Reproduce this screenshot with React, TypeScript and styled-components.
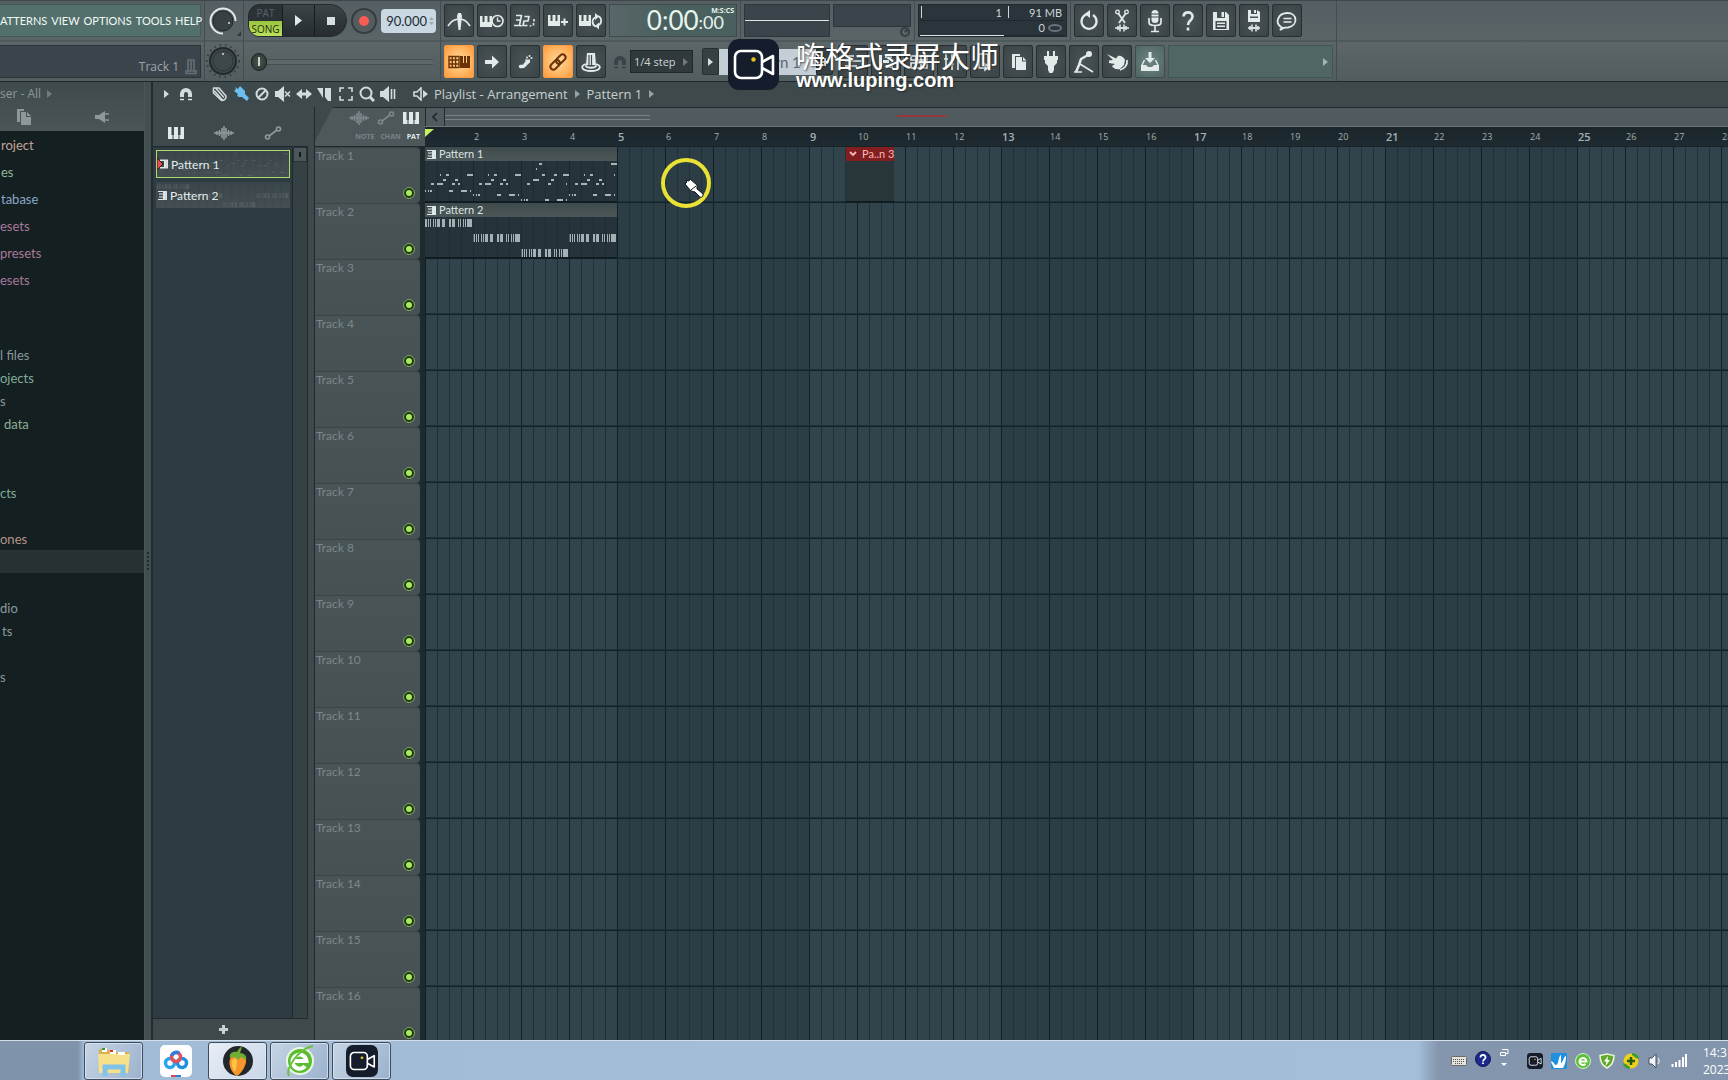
import React from "react";
import styled, { createGlobalStyle, css } from "styled-components";

const narrow = `Lato, "Open Sans", sans-serif`;
const humanist = `"Open Sans", "Noto Sans", sans-serif`;

const Global = createGlobalStyle`
  *, *::before, *::after { box-sizing: border-box; }
  body { margin: 0; background: #3e494b; overflow: hidden; }
  button, input, select { font: inherit; color: inherit; margin: 0; padding: 0; border: 0; background: none; }
  h1, h2, p, ul, ol { margin: 0; padding: 0; font-weight: 400; list-style: none; }
  svg { display: block; flex: none; }
`;

const Screen = styled.div`
  position: relative;
  display: flex;
  flex-direction: column;
  height: 100vh;
  overflow: hidden;
  font-family: ${narrow};
  color: #dfe6e6;
`;

/* ---------- top toolbar ---------- */

const Toolbar = styled.header`
  display: flex;
  height: 82px;
  flex: none;
  background: linear-gradient(#555e62, #5a6568 39px, #414c4f 40px, #5c6669 41px, #525d60);
  border-top: 1px solid #3e474a;
  border-bottom: 1px solid #20292c;
`;

const Block = styled.div<{ $w?: number }>`
  display: grid;
  grid-template-rows: 39px 41px;
  width: ${(p) => (p.$w ? `${p.$w}px` : "auto")};
  flex: none;
  border-right: 1px solid #434c4f;
`;

const Row = styled.div<{ $gap?: number; $pad?: string }>`
  display: flex;
  align-items: center;
  gap: ${(p) => p.$gap ?? 0}px;
  padding: ${(p) => p.$pad ?? "0"};
  min-width: 0;
`;

const Divider = styled.span`
  width: 1px;
  height: 39px;
  background: #434c4f;
`;

const MenuBar = styled.nav`
  display: flex;
  align-items: center;
  gap: 4px;
  width: 201px;
  height: 33px;
  background: #53706c;
  border: 1px solid #425855;
  border-left: 0;
`;

const MenuItem = styled.button`
  font-size: 11px;
  line-height: 20px;
  color: #f2faf6;
`;

const HintBar = styled.div`
  display: flex;
  align-items: flex-end;
  justify-content: flex-end;
  gap: 6px;
  width: 201px;
  height: 33px;
  padding: 0 3px 2px;
  background: #3b444b;
  border: 1px solid #2b3438;
  border-left: 0;
  font-family: ${humanist};
  font-size: 12px;
  line-height: 16px;
  color: #9aa4a8;
`;

const KnobCell = styled.div`
  display: grid;
  place-items: center;
  width: 100%;
`;

const Transport = styled.div`
  display: flex;
  width: 99px;
  height: 33px;
  overflow: hidden;
  border: 1px solid #23292c;
  border-radius: 12px 17px 17px 12px;
  background: #2b3236;
`;

const ModeSwitch = styled.div`
  display: grid;
  grid-template-rows: 16px 15px;
  width: 33px;
`;

const Mode = styled.button<{ $on?: boolean }>`
  font-family: ${humanist};
  font-size: 10px;
  line-height: 14px;
  text-align: center;
  color: ${(p) => (p.$on ? "#1d2a0c" : "#5a6367")};
  background: ${(p) => (p.$on ? "linear-gradient(#9ac53c, #bbe45d)" : "transparent")};
`;

const TransportKey = styled.button`
  display: grid;
  place-items: center;
  flex: 1;
  border-left: 1px solid #171c1f;
  background: linear-gradient(#3c4448, #262c30);
`;

const RecordRing = styled.button`
  display: grid;
  place-items: center;
  width: 26px;
  height: 26px;
  flex: none;
  border-radius: 50%;
  border: 2px solid #343c3f;
  background: #555d60;
`;

const TempoBox = styled.label`
  display: flex;
  align-items: center;
  gap: 2px;
  width: 55px;
  height: 24px;
  border-radius: 4px;
  background: #c9d8e2;
`;

const Tempo = styled.input`
  width: 46px;
  height: 24px;
  outline: 0;
  color: #222c34;
  font-size: 13px;
  text-align: right;
`;

const Slider = styled.input`
  appearance: none;
  width: 182px;
  height: 18px;
  background: linear-gradient(transparent 6px, #454e51 6px 7px, #5d676a 7px 11px, #454e51 11px 12px, transparent 12px);
  &::-webkit-slider-thumb {
    appearance: none;
    width: 16px;
    height: 18px;
    border-radius: 8px;
    border: 1px solid #1c2521;
    background: linear-gradient(90deg, transparent 6px, #c9d2cc 6px 8px, transparent 8px) 0 3px / 14px 9px no-repeat, radial-gradient(#4b5b53, #26302c);
  }
`;

const ToolButton = styled.button<{ $tone?: "hot" | "glass" }>`
  display: grid;
  place-items: center;
  width: 30px;
  height: 33px;
  flex: none;
  color: #e2eaea;
  border: 1px solid #272f32;
  border-radius: 2px;
  background: radial-gradient(#4a5457, #3a4447);
  ${(p) => p.$tone === "hot" && css`
    color: #6b3207;
    border-color: #ff9c3f;
    background: radial-gradient(#ffdd9c, #ff9a3c);
  `}
  ${(p) => p.$tone === "glass" && css`
    background: radial-gradient(#6d8582, #4f6563);
    border-color: #3d4d4c;
  `}
`;

const SnapBox = styled.label`
  display: flex;
  align-items: center;
  gap: 3px;
  width: 63px;
  height: 23px;
  padding: 0 4px 0 3px;
  background: #30393c;
  border: 1px solid #20282b;
  font-family: ${humanist};
  font-size: 11px;
  color: #cdd6d8;
`;

const SnapSelect = styled.select`
  appearance: none;
  width: 46px;
  outline: 0;
`;

const SmallArrow = styled.button`
  display: grid;
  place-items: center;
  width: 17px;
  height: 27px;
  background: #363f42;
  border: 1px solid #262e31;
  border-radius: 2px;
`;

const PatternName = styled.button`
  width: 97px;
  height: 26px;
  padding-left: 6px;
  background: #c3ced6;
  color: #5d676e;
  font-size: 15px;
  text-align: center;
`;

const Clock = styled.div`
  position: relative;
  display: flex;
  align-items: flex-end;
  justify-content: flex-end;
  width: 128px;
  height: 33px;
  padding: 0 12px 2px 0;
  background: linear-gradient(90deg, #5a6669, #49605e 60px);
  border: 1px solid #3f4a4d;
  color: #e6f4ee;
`;

const ClockBig = styled.span`
  font-size: 26px;
  line-height: 28px;
`;

const ClockSmall = styled.span`
  font-size: 18px;
  line-height: 24px;
`;

const ClockUnit = styled.span`
  position: absolute;
  top: 2px;
  right: 2px;
  font-family: ${humanist};
  font-size: 7px;
  font-weight: 700;
  line-height: 8px;
`;

const Scope = styled.div`
  display: flex;
  align-items: center;
  width: 86px;
  height: 33px;
  background: #3b444b;
  border: 1px solid #2d363a;
  &::after { content: ""; flex: 1; height: 1px; background: #dde4e8; }
`;

const Peak = styled.div`
  display: grid;
  grid-template-rows: 23px 10px;
  justify-items: end;
  width: 78px;
  height: 33px;
`;

const PeakScreen = styled.div`
  width: 100%;
  height: 23px;
  background: #3b444b;
  border: 1px solid #2d363a;
`;

const Meter = styled.dl`
  display: grid;
  grid-template-columns: 84px 1fr;
  grid-template-rows: 16px 15px;
  width: 149px;
  height: 33px;
  margin: 0;
  padding: 0 2px 0 1px;
  background: #2b343b;
  border: 1px solid #20292e;
  font-size: 11px;
  line-height: 16px;
  color: #ccd6da;
`;

const MeterCell = styled.dd<{ $bar?: boolean; $base?: boolean }>`
  display: flex;
  align-items: center;
  justify-content: flex-end;
  gap: 3px;
  margin: 0;
  padding-right: 2px;
  border-bottom: ${(p) => (p.$base ? "1px solid #dde4e8" : "1px solid #20292e")};
  ${(p) => p.$bar && css`background: linear-gradient(#cdd6d8, #cdd6d8) 1px 1px / 1px 12px no-repeat;`}
  &:nth-child(2) { background-position: 4px 1px; }
`;

const NewsPanel = styled.div`
  display: flex;
  align-items: center;
  justify-content: flex-end;
  width: 165px;
  height: 33px;
  padding-right: 4px;
  background: #506664;
  border: 1px solid #425654;
`;

/* ---------- workspace ---------- */

const Workspace = styled.main`
  display: flex;
  flex: 1;
  min-height: 0;
`;

const Browser = styled.aside`
  display: flex;
  flex-direction: column;
  width: 144px;
  flex: none;
  overflow: hidden;
  background: #141f22;
`;

const BrowserHead = styled.div`
  height: 49px;
  padding-top: 3px;
  background: linear-gradient(#3f4a4c, #4a5557);
  color: #8d989b;
  font-family: ${humanist};
`;

const BrowserTitle = styled.h2`
  display: flex;
  align-items: center;
  gap: 6px;
  font-size: 12px;
  line-height: 18px;
`;

const BrowserIcons = styled.div`
  display: flex;
  align-items: center;
  gap: 64px;
  padding: 6px 0 0 17px;
`;

const Tree = styled.ul<{ $row: number }>`
  display: grid;
  grid-auto-rows: ${(p) => p.$row}px;
  & + & { padding-top: 50px; }
`;

const TreeRow = styled.li<{ $tone?: string; $active?: boolean; $pad?: number }>`
  display: flex;
  align-items: center;
  padding-left: ${(p) => p.$pad ?? 0}px;
  font-size: 13px;
  white-space: pre;
  color: ${(p) => p.$tone ?? "#8a9a9b"};
  background: ${(p) => (p.$active ? "#263134" : "transparent")};
`;

const Splitter = styled.div`
  display: grid;
  align-content: center;
  justify-content: center;
  width: 9px;
  flex: none;
  background: #434e51;
  border-left: 1px solid #4a5558;
  border-right: 2px solid #222c30;
`;

const Playlist = styled.section`
  display: flex;
  flex-direction: column;
  flex: 1;
  min-width: 0;
  background: #3e494b;
`;

const TitleBar = styled.div`
  display: flex;
  align-items: center;
  height: 25px;
  flex: none;
  padding: 0 0 1px 10px;
  gap: 4px;
`;

const TitleTool = styled.button<{ $tone?: string; $w?: number }>`
  display: grid;
  place-items: center;
  width: ${(p) => p.$w ?? 17}px;
  height: 18px;
  color: ${(p) => p.$tone ?? "#d3dcdc"};
`;

const Crumbs = styled.h1`
  display: flex;
  align-items: center;
  gap: 7px;
  font-family: ${humanist};
  font-size: 13px;
  line-height: 18px;
  color: #c6d0d1;
`;

const Body = styled.div`
  display: grid;
  grid-template-columns: 155px 6px 111px minmax(0, 1fr);
  flex: 1;
  min-height: 0;
`;

const Picker = styled.div`
  display: grid;
  grid-template-rows: 39px minmax(0, 1fr) 21px;
  min-height: 0;
`;

const PickerTabs = styled.div`
  display: flex;
  align-items: center;
  gap: 30px;
  padding: 12px 0 0 15px;
  color: #8f9a9c;
`;

const PickerMain = styled.div`
  display: grid;
  grid-template-columns: minmax(0, 1fr) 15px;
  border: 1px solid #20292d;
  border-left: 0;
`;

const PatternList = styled.ul`
  display: grid;
  align-content: start;
  gap: 4px;
  padding: 3px 2px 0 3px;
  background: #2f3b43;
`;

const PatternEntry = styled.li<{ $on?: boolean }>`
  position: relative;
  display: flex;
  align-items: center;
  gap: 3px;
  height: ${(p) => (p.$on ? 28 : 26)}px;
  padding-left: ${(p) => (p.$on ? 0 : 2)}px;
  font-size: 12px;
  color: #e8efef;
  border: ${(p) => (p.$on ? "1px solid #a9dc6b" : "0")};
  background: linear-gradient(#3a464a, #434f53);
`;

const Ghost = styled.span`
  position: absolute;
  inset: 1px;
  overflow: hidden;
  opacity: 0.16;
  svg { width: 100%; height: 100%; }
`;

const ListTrack = styled.div`
  background: #364144;
  border-left: 1px solid #20292d;
`;

const ListThumb = styled.div`
  display: grid;
  place-items: center;
  height: 15px;
  background: #4c575a;
  border: 1px solid #293336;
  &::after { content: ""; width: 2px; height: 5px; background: #12191b; }
`;

const AddPattern = styled.button`
  display: grid;
  place-items: center;
  width: 141px;
  color: #c8d1d2;
`;

const TrackColumn = styled.div`
  display: grid;
  grid-template-rows: 40px minmax(0, 1fr);
  min-height: 0;
  overflow: hidden;
  border-left: 1px solid #20292d;
`;

const TrackTab = styled.div`
  display: grid;
  grid-template-rows: 20px 18px;
  justify-items: end;
  background: #4d585b;
  clip-path: polygon(18px 0, 100% 0, 100% 100%, 0 100%, 0 34px);
  border-top: 1px solid #20292d;
  border-bottom: 1px solid #20292d;
`;

const FilterRow = styled.div<{ $pad: number; $gap: number }>`
  display: flex;
  align-items: center;
  gap: ${(p) => p.$gap}px;
  padding-right: ${(p) => p.$pad}px;
  color: #7d888c;
`;

const Filter = styled.button<{ $on?: boolean }>`
  font-family: ${humanist};
  font-size: 7px;
  font-weight: 700;
  line-height: 10px;
  color: ${(p) => (p.$on ? "#e2e9e9" : "#78848a")};
`;

const Tracks = styled.ol`
  background: #1e2a2e;
`;

const TrackHead = styled.li`
  display: flex;
  justify-content: space-between;
  height: 56px;
  width: 105px;
  padding: 0 5px 3px 1px;
  background: linear-gradient(#495457, #465154);
  border-top: 1px solid #3a4548;
  border-radius: 0 4px 4px 0;
  font-size: 12px;
  line-height: 15px;
  color: #7b868a;
`;

const Led = styled.input`
  appearance: none;
  align-self: flex-end;
  width: 10px;
  height: 10px;
  border-radius: 50%;
  border: 2px solid #1f3515;
  outline: 1px solid #7da652;
  background: #a8ec5a;
  margin: 0 1px 2px 0;
`;

const Arrangement = styled.div`
  display: grid;
  grid-template-rows: 20px 20px minmax(0, 1fr);
  min-width: 0;
  min-height: 0;
`;

const HScroll = styled.div`
  display: grid;
  grid-template-columns: 20px 205px 247px 50px;
  align-items: center;
  background: #505b5f;
  border-top: 1px solid #20292d;
  border-bottom: 1px solid #6b7679;
`;

const ScrollBack = styled.button`
  display: grid;
  place-items: center;
  height: 18px;
  border-right: 1px solid #20292d;
  border-left: 1px solid #20292d;
  color: #20292d;
`;

const ScrollThumb = styled.div`
  height: 5px;
  border-top: 1px solid #768286;
  border-bottom: 1px solid #768286;
`;

const RedMark = styled.div`
  grid-column: 4;
  height: 2px;
  margin-bottom: 3px;
  background: #99383c;
`;

const Ruler = styled.ol`
  display: flex;
  overflow: hidden;
  background: linear-gradient(#1b262b, #1e2b30);
  border-bottom: 1px solid #16242a;
`;

const BarNumber = styled.li<{ $major: boolean }>`
  width: 48px;
  flex: none;
  padding-left: 1px;
  font-family: ${humanist};
  font-size: ${(p) => (p.$major ? 11 : 9)}px;
  font-weight: ${(p) => (p.$major ? 600 : 400)};
  line-height: 20px;
  color: #a3afb3;
`;

const PlayHead = styled.span`
  display: block;
  width: 0;
  margin: 2px 0 0 -1px;
  border-top: 8px solid #c6ee62;
  border-right: 9px solid transparent;
`;

const Lanes = styled.div`
  position: relative;
  overflow: hidden;
  background:
    linear-gradient(#0f1f26, #0f1f26) 0 0 / 1px 100% no-repeat,
    repeating-linear-gradient(transparent 0 55px, #11242b 55px 56px),
    repeating-linear-gradient(transparent 0 54px, #1e3037 54px 56px),
    repeating-linear-gradient(90deg, #0f2229 0 1px, transparent 1px 48px),
    repeating-linear-gradient(90deg, #1f323a 0 1px, transparent 1px 12px),
    repeating-linear-gradient(90deg, #32444b 0 192px, #2c3d45 192px 384px);
`;

const Clip = styled.article<{ $x: number; $y: number; $w: number; $red?: boolean }>`
  position: absolute;
  left: ${(p) => p.$x}px;
  top: ${(p) => p.$y}px;
  width: ${(p) => p.$w}px;
  height: 56px;
  background: ${(p) => (p.$red ? "#28363a" : "#26333a")};
  border-bottom: 2px solid #0f1c22;
`;

const ClipTitle = styled.h2<{ $red?: boolean }>`
  display: flex;
  align-items: center;
  gap: ${(p) => (p.$red ? 5 : 3)}px;
  height: 14px;
  padding-left: ${(p) => (p.$red ? 3 : 2)}px;
  white-space: nowrap;
  font-size: 11px;
  line-height: 14px;
  color: ${(p) => (p.$red ? "#f3b9b9" : "#dbe3e5")};
  background: ${(p) => (p.$red ? "#831e20" : "linear-gradient(#3f4a4c, #4c5758)")};
`;

const ClickRing = styled.div`
  position: absolute;
  left: 236px;
  top: 11px;
  width: 50px;
  height: 50px;
  border: 4px solid #e9e234;
  border-radius: 50%;
`;

/* ---------- watermark ---------- */

const Watermark = styled.div`
  position: absolute;
  left: 728px;
  top: 39px;
  display: flex;
  gap: 17px;
  color: #fff;
  text-shadow: 1px 1px 2px #222b;
`;

const WatermarkName = styled.p`
  font-family: "Noto Sans CJK SC", sans-serif;
  font-size: 29px;
  line-height: 32px;
`;

const WatermarkSite = styled.p`
  font-family: "Liberation Sans", sans-serif;
  font-size: 20px;
  font-weight: 700;
  line-height: 18px;
`;

/* ---------- taskbar ---------- */

const Taskbar = styled.footer`
  display: flex;
  align-items: center;
  justify-content: space-between;
  height: 40px;
  flex: none;
  border-top: 1px solid #d3dfec;
  background: linear-gradient(90deg, #7f93ab 0 78px, #a2bbd7 84px, #a4bdd9 calc(100% - 310px), #8396ad calc(100% - 290px), #8295ac);
`;

const Apps = styled.div`
  display: flex;
  gap: 3px;
  padding-left: 84px;
`;

const AppButton = styled.button<{ $style: "flat" | "lit" | "open" }>`
  display: grid;
  place-items: center;
  width: 59px;
  height: 38px;
  border: 1px solid ${(p) => (p.$style === "flat" ? "transparent" : "#3f4c5b")};
  border-radius: 3px;
  background: ${(p) =>
    p.$style === "flat" ? "none" : p.$style === "lit" ? "linear-gradient(135deg, #e8eef6, #c9d7e8)" : "linear-gradient(120deg, #c6d4e5, #9bb2cd)"};
  box-shadow: ${(p) => (p.$style === "flat" ? "none" : "inset 0 0 0 1px #e2ebf5aa")};
`;

const Tray = styled.div`
  display: flex;
  align-items: center;
  gap: 8px;
`;

const TraySet = styled.div<{ $pad: number }>`
  display: flex;
  align-items: center;
  gap: 8px;
  padding-right: ${(p) => p.$pad}px;
`;

const TrayClock = styled.time`
  width: 25px;
  overflow: hidden;
  white-space: nowrap;
  font-family: ${humanist};
  font-size: 12px;
  line-height: 17px;
  color: #fff;
`;

/* ---------- drawings ---------- */

const S = ({ w = 24, h = 24, children }: { w?: number; h?: number; children: React.ReactNode }) => (
  <svg width={w} height={h} viewBox={`0 0 ${w} ${h}`} fill="none" stroke="currentColor" strokeWidth="2" aria-hidden="true">
    {children}
  </svg>
);

const Fill = ({ d }: { d: string }) => <path d={d} fill="currentColor" stroke="none" />;

const Piano = () => (
  <svg width="16" height="12" viewBox="0 0 16 12" aria-hidden="true">
    <path fill="#e2e9e9" d="M0 0H3.500V8H6V0H10V8H12.500V0H16V12H0Z" />
    <path stroke="#3e494b" d="M5 8V12M11 8V12" />
  </svg>
);

const Wave = () => (
  <S w={20} h={14}><path strokeWidth="1.600" d="M0 7H20M3 5V9M5.500 4V10M8 2V12M10 0V14M12 2V12M14.500 4V10M17 5V9" /></S>
);

const Auto = () => (
  <S w={18} h={14}><path strokeWidth="1.600" d="M5 10 13 4" /><circle cx="3.500" cy="11" r="2" strokeWidth="1.600" /><circle cx="14.500" cy="3" r="2" strokeWidth="1.600" /></S>
);

const Tri = ({ c = "#98a3a6" }: { c?: string }) => (
  <svg width="5" height="8" viewBox="0 0 5 8" aria-hidden="true"><path fill={c} d="M0 0 5 4 0 8Z" /></svg>
);

const MiniClip = () => (
  <svg width="9" height="9" viewBox="0 0 9 9" aria-hidden="true"><path fill="#dfe6e6" d="M0 0H9V9H0V8H5V6.500H1V5.500H5V3.500H1V2.500H5V1H0Z" /></svg>
);

const Magnet = ({ c = "#d3dcdc" }: { c?: string }) => (
  <svg width="14" height="14" viewBox="0 0 14 14" aria-hidden="true">
    <path fill="none" stroke={c} strokeWidth="4" d="M3 10V7a4 4 0 0 1 8 0v3" /><path stroke={c} strokeWidth="1.500" fill="none" d="M1 12.500H5M9 12.500H13" />
  </svg>
);

const Camera = ({ s }: { s: number }) => (
  <svg width={s} height={s} viewBox="0 0 51 51" aria-hidden="true">
    <rect width="51" height="51" rx="11" fill="#151c2c" />
    <rect x="7" y="12" width="27" height="27" rx="6" fill="none" stroke="#fff" strokeWidth="2.600" />
    <path d="M34 23 45 17V35L34 29" fill="none" stroke="#fff" strokeWidth="2.600" strokeLinejoin="round" />
    <circle cx="25.500" cy="20.500" r="2.200" fill="#e5c312" />
  </svg>
);

const keys = "M0 0h2.500v6h2V0h3v6h2V0h2.500v11H0z";

const iconRow1: [string, React.ReactNode][] = [
  ["Metronome", <S><Fill d="M11 4h3l1 3-1.500 14h-2L10 7z" /><path strokeWidth="1.600" d="M1 17C4 12 8 10 12.500 10S20 12 23 17" /></S>],
  ["Wait for input", <S><g transform="translate(0 7)"><Fill d={keys} /></g><circle cx="17.500" cy="12" r="5.500" strokeWidth="1.600" fill="#434d50" /><path strokeWidth="1.300" d="M17.500 8.500V12h3" /></S>],
  ["Countdown", <S><path strokeWidth="1.600" strokeLinejoin="round" d="M3 6.500h5.500l-1 4.500H3M7.500 11l-1 5.500H1M11.500 7.500h4.500l-1 4.500h-4l-1 4.500h4.500M8 16v1.500M17.500 16v1.500M21 10v2.500M20.500 14v2.500" /></S>],
  ["Blend notes", <S><g transform="translate(2 6)"><Fill d={keys} /></g><path d="M15 13h7M18.500 9.500v7" /></S>],
  ["Loop record", <S><g transform="translate(0 6)"><Fill d={keys} /></g><path strokeWidth="1.700" d="M17 17.500c-4-1-5-7.500 0-9.500M19 7c4 1.500 4.500 7.500 0 9.500" /><Fill d="M16 4l4 3.500-4 3.500zM20 13.500l-4 3.500 4 3.500z" /></S>],
];

const iconRow2: [string, React.ReactNode, ("hot" | "glass")?][] = [
  ["Typing keyboard", <S><path strokeWidth="1.400" d="M2 6.500h10v11H2zM5.300 6v12M8.600 6v12M2 10h10M2 14h10" /><Fill d="M13 6h3v7h1V6h2v7h1V6h3v12H13z" /></S>, "hot"],
  ["Step edit", <S><Fill d="M5 10h7V5.500l7 6.500-7 6.500V14H5z" /></S>],
  ["Note slide", <S><path strokeWidth="3.500" strokeLinecap="round" d="M7.500 16.500c4 .5 4-1 5.500-3l2-2" /><Fill d="M12 9.500h5v3l-3 2z" /><circle cx="14" cy="7.500" r="1" fill="currentColor" stroke="none" /><circle cx="16.500" cy="6" r="1" fill="currentColor" stroke="none" /><circle cx="18.500" cy="8" r="1" fill="currentColor" stroke="none" /></S>],
  ["Link", <S><g transform="rotate(-45 12 12)" strokeWidth="2"><rect x="2.500" y="9" width="11" height="6" rx="3" /><rect x="10.500" y="9" width="11" height="6" rx="3" /></g></S>, "hot"],
  ["Performance", <S><Fill d="M8 3h8l1 12H7z" /><path stroke="#434d50" strokeWidth="1.200" d="M10 5v10M12.500 5v10" /><path strokeWidth="1.800" d="M7 14c-7 2-4 7 5 7s12-5 5-7M6.500 15.500c2 3 9 3 11 0" /></S>],
];

const iconWindows: [string, React.ReactNode, ("hot" | "glass")?][] = [
  ["Playlist", <S><path d="M4 6h9M4 11h16M4 16h12" strokeWidth="1.700" /></S>],
  ["Piano roll", <S><Fill d="M5 5h3v14H5zM11 5h7v3h-7zM9 10h6v3H9zM12 15h7v3h-7z" /></S>],
  ["Channel rack", <S><path strokeWidth="1.600" d="M4 6h16v4H4zM4 13h16v5H4zM9 6v12M14 6v12" /></S>],
  ["Mixer", <S><path strokeWidth="1.600" d="M6 4v16M12 4v16M18 4v16M4 9h4M10 14h4M16 8h4" /></S>],
  ["Browser", <S><path strokeWidth="1.600" d="M6 4h9v14H6zM12 14l4 3-4 3z" /></S>],
  ["Project files", <S><Fill d="M6 4h8v2H9v12H6z" /><Fill d="M10 7h6v4.500h4V20H10zM17 7l3.500 3.500H17z" /></S>],
  ["Plugins", <S><Fill d="M8 1h2v5h4V1h2v5h3v4h-1v3l-3 3v4l-1.500 3h-3L9 20v-4l-3-3v-3H5V6h3z" /></S>],
  ["Touch controllers", <S><circle cx="17" cy="4" r="3" fill="currentColor" stroke="none" /><path strokeWidth="2.500" d="M16 5 9 9 7 15l-3 7" /><path strokeWidth="1.600" d="M8 14l13 8M2 22h8" /></S>],
  ["Tools", <S><Fill d="M2 4 11 8.500 13 6c2-1 6 1 7 4l-1 5-4 4c-4 1-7-1-8-3l3-2-6-1v-2.500l4-.5z" /><path strokeWidth="1.800" d="M22 10c1 5-3 9-7 10" /></S>],
  ["Download", <S><Fill d="M10.500 2h3v6H17l-5 5-5-5h3.500z" /><Fill d="M3 15h5l2 2h4l2-2h5v6H3z" /><path strokeWidth="1.500" d="M6.500 10 4 15M17.500 10l2.500 5" /></S>, "glass"],
];

const iconRight: [string, React.ReactNode][] = [
  ["Undo", <S><path strokeWidth="2.300" d="M9 5.500A7.500 7.500 0 1 0 16 6" /><Fill d="M13 1v8L7.500 5z" /></S>],
  ["Cut", <S><path strokeWidth="1.800" d="M8 4l7 10M16 4 9 14" /><circle cx="7.500" cy="3" r="1.800" strokeWidth="1.300" /><circle cx="16.500" cy="3" r="1.800" strokeWidth="1.300" /><path strokeWidth="1.500" d="M5 19h14M8 17v4M10 15.500v7M12 18v2M14 15.500v7M16 17v4" /></S>],
  ["Record audio", <S><rect x="8.500" y="1" width="7" height="13" rx="3.500" fill="currentColor" stroke="none" /><path stroke="#434d50" strokeWidth="1" d="M8 5h8M8 8h8" /><path strokeWidth="1.700" d="M6 9v4.500c0 4 12 4 12 0V9M12 16v6M8 22.500h8" /></S>],
  ["Help", <S><path strokeWidth="2.600" d="M7.500 7.500C8 2 16.500 2 16.500 7.500c0 4-4.500 4-4.500 8.500M12 18.500v3" /></S>],
  ["Save", <svg width="16" height="18" viewBox="0 0 16 18" aria-hidden="true"><path fill="currentColor" fillRule="evenodd" d="M0 0H4V6H12V0H13L16 3V18H0ZM8.500 0H11V5H8.500ZM2.500 9V17H13.500V9ZM4 10.500H12V12H4ZM4 13.500H12V15H4Z" /></svg>],
  ["Render", <S><g transform="translate(6 1)"><path fill="currentColor" stroke="none" fillRule="evenodd" d="M0 0H3V4H9V0L12 2V12H0ZM6 0h2v3H6zM2 6.500h8V8H2z" /></g><path strokeWidth="1.500" d="M6 19h12M8 17v4M10 15.500v7M12 18v2M14 15.500v7M16 17v4" /></S>],
  ["News", <S><path strokeWidth="1.800" d="M7 18.500C-1 14 3 4 12.500 4S24 16 13 18.500c-2 .3-3 0-3 0L5 21z" /><path strokeWidth="1.600" d="M8.500 9.500h8M8.500 13h8" /></S>],
];

const tools: [string, React.ReactNode, string?][] = [
  ["Draw", <S w={16} h={16}><path strokeWidth="1.500" strokeLinejoin="round" d="M1.500 2v5l8 7.500c3 0 5-2 4.500-4.500L7 2zM4 2.500l8 9M2.500 5l8 9" /></S>],
  ["Paint", <S w={16} h={16}><Fill d="M1 5 3 3 2 1 5 3 7 0l5 5v3l4 4-2 3-5-4H6L4 10l1-2z" /></S>, "#6cc0f0"],
  ["Delete", <S w={16} h={16}><circle cx="8" cy="8" r="5.500" /><path d="M4 12 12 4" /></S>],
  ["Mute", <S w={16} h={16}><Fill d="M0 5h3l6-5v16l-6-5H0z" /><path strokeWidth="1.500" d="M10 5.500l5 5M15 5.500l-5 5" /></S>],
  ["Slip", <S w={16} h={16}><Fill d="M0 8l6-5v3.500h4V3l6 5-6 5V9.500H6V13z" /></S>],
  ["Slice", <S w={16} h={16}><Fill d="M0 2h6v10zM8 2h6v13h-3l-3-4z" /></S>],
  ["Select", <S w={16} h={16}><path strokeWidth="1.600" d="M2 6V2h4M10 2h4v4M14 10v4h-4M6 14H2v-4" /></S>],
  ["Zoom", <S w={16} h={16}><circle cx="7" cy="7" r="5.500" /><path strokeWidth="3" d="M11 11l4 4" /></S>],
  ["Play selection", <S w={16} h={16}><Fill d="M0 5h3l6-5v16l-6-5H0z" /><path strokeWidth="1.600" d="M11.500 3v10M14.500 3v10" /></S>],
];

const firstTree: [string, string][] = [
  ["roject", "#c2a498"], ["es", "#93b596"], ["tabase", "#8ba7c8"],
  ["esets", "#a87a99"], ["presets", "#a87a99"], ["esets", "#a87a99"],
];

const secondTree: { t: string; c?: string; active?: boolean; pad?: number }[] = [
  { t: "l files" }, { t: "ojects", c: "#82ac96" }, { t: "s" }, { t: "data", c: "#8bb094", pad: 4 }, { t: "" }, { t: "" },
  { t: "cts", c: "#82ac96" }, { t: "" }, { t: "ones", c: "#b3958a" }, { t: "", active: true }, { t: "" },
  { t: "dio" }, { t: "ts", pad: 2 }, { t: "" }, { t: "s" },
];

type Note = [number, number, number];
const rise: Note[] = [[6, 38, 3], [12, 38, 6], [18, 34, 3], [15, 29, 1], [21, 29, 3], [27, 38, 3], [30, 34, 3], [33, 38, 2], [42, 29, 6]];
const leap: Note[] = [[6, 38, 3], [12, 34, 6], [15, 23, 1], [18, 18, 3], [21, 29, 3], [27, 38, 3], [30, 34, 3], [33, 29, 3], [42, 29, 6], [45, 38, 1]];
const ending: Note[] = [...rise.slice(0, 8), [42, 18, 6], [45, 29, 1]];
const bass: [number, number][] = [[0, 1], [3, 1], [5, 2], [24, 4], [36, 5], [41, 1], [45, 1]];
const melody: Note[] = [rise, rise, leap, ending].flatMap((upper, bar) =>
  [...upper, ...bass.map(([x, w]): Note => [x, [45, 49, 54, 49][bar], w])].map(([x, y, w]): Note => [x + bar * 48, y, w]));

const pulse = [[0, 2], [3, 1], [5, 1], [8, 1], [10, 1], [12, 3], [17, 3], [24, 2], [27, 3], [33, 1], [35, 1], [38, 1], [40, 1], [42, 5]];

const MelodyNotes = () => (
  <svg width="192" height="40" viewBox="0 14 192 40" preserveAspectRatio="none" aria-hidden="true">
    <path stroke="#1a272d" d="M48.500 14V56M96.500 14V56M144.500 14V56" />
    <path stroke="#1f2d33" d="M12.500 14V56M24.500 14V56M36.500 14V56M60.500 14V56M72.500 14V56M84.500 14V56M108.500 14V56M120.500 14V56M132.500 14V56M156.500 14V56M168.500 14V56M180.500 14V56" />
    {melody.map(([x, y, w], i) => <rect key={i} x={x} y={y - 2} width={w} height="2" fill="#a9b5b9" />)}
  </svg>
);

const PulseNotes = () => (
  <svg width="192" height="40" viewBox="0 0 192 40" preserveAspectRatio="none" aria-hidden="true">
    <path stroke="#1f2d33" d="M12.500 0V40M24.500 0V40M36.500 0V40M60.500 0V40M72.500 0V40M84.500 0V40M108.500 0V40M120.500 0V40M132.500 0V40M156.500 0V40M168.500 0V40M180.500 0V40" />
    {[2, 17, 32, 17].map((y, bar) => pulse.map(([x, w]) => <rect key={`${bar}-${x}`} x={x + bar * 48} y={y} width={w} height="8" fill="#a3b0b4" />))}
    <path stroke="#1a272d" d="M48.500 0V40M96.500 0V40M144.500 0V40" opacity=".6" />
  </svg>
);

const Buttons = ({ items }: { items: [string, React.ReactNode, ("hot" | "glass")?][] }) => (
  <>{items.map(([name, icon, tone]) => <ToolButton key={name} type="button" aria-label={name} $tone={tone}>{icon}</ToolButton>)}</>
);

export default function App() {
  return (
    <Screen>
      <Global />
      <Toolbar>
        <Block $w={205}>
          <Row>
            <MenuBar>{["ATTERNS", "VIEW", "OPTIONS", "TOOLS", "HELP"].map((m) => <MenuItem key={m} type="button">{m}</MenuItem>)}</MenuBar>
          </Row>
          <Row $pad="2px 0 0">
            <HintBar>Track 1 <S w={12} h={16}><path stroke="#667075" strokeWidth="1.600" d="M3 12V1h6v11M1 12h10v2.500H1zM6 2v9" /></S></HintBar>
          </Row>
        </Block>
        <Block $w={39}>
          <KnobCell>
            <svg width="34" height="32" viewBox="0 0 34 32" aria-hidden="true">
              <circle cx="16" cy="16" r="10" fill="#384043" stroke="#20272a" />
              <path d="M16 28.500A12.500 12.500 0 1 1 28.500 16" fill="none" stroke="#e3eaec" strokeWidth="2" />
              <circle cx="22" cy="18" r="1" fill="#d7dedf" /><path fill="#30383b" d="M30 31h4v-5z" />
            </svg>
          </KnobCell>
          <KnobCell>
            <svg width="36" height="36" viewBox="0 0 36 36" aria-hidden="true">
              <circle cx="17" cy="18" r="16" fill="none" stroke="#353d40" strokeWidth="2" strokeDasharray="1.500 4" />
              <circle cx="17" cy="18" r="13" fill="#3e474a" stroke="#22292c" strokeWidth="2" />
              <circle cx="17" cy="18" r="10" fill="none" stroke="#2c3437" /><circle cx="17" cy="11" r="1" fill="#d7dedf" />
            </svg>
          </KnobCell>
        </Block>
        <Block $w={197}>
          <Row $gap={4} $pad="0 0 0 4px">
            <Transport>
              <ModeSwitch><Mode type="button">PAT</Mode><Mode type="button" $on>SONG</Mode></ModeSwitch>
              <TransportKey type="button" aria-label="Play"><svg width="7" height="11" viewBox="0 0 7 11"><path fill="#e2e9e9" d="M0 0 7 5.500 0 11Z" /></svg></TransportKey>
              <TransportKey type="button" aria-label="Stop"><svg width="8" height="8"><rect width="8" height="8" fill="#d5dfdf" /></svg></TransportKey>
            </Transport>
            <RecordRing type="button" aria-label="Record">
              <svg width="10" height="10" viewBox="0 0 10 10"><circle cx="5" cy="5" r="5" fill="#fb5b55" /></svg>
            </RecordRing>
            <TempoBox>
              <Tempo aria-label="Tempo" defaultValue="90.000" />
              <svg width="5" height="10" viewBox="0 0 5 10" aria-hidden="true"><path fill="#9aa8b2" d="M0 4 2.500 1 5 4ZM0 6H5L2.500 9Z" /></svg>
            </TempoBox>
          </Row>
          <Row $pad="2px 0 0 7px"><Slider type="range" aria-label="Main pitch" defaultValue={0} /></Row>
        </Block>
        <Block>
          <Row $gap={3} $pad="0 0 0 3px">
            <Buttons items={iconRow1} />
            <Clock><ClockBig>0:00</ClockBig><ClockSmall>:00</ClockSmall><ClockUnit>M:S:CS</ClockUnit></Clock>
            <Divider />
            <Scope />
            <Peak><PeakScreen /><svg width="12" height="11" viewBox="0 0 12 11"><circle cx="6" cy="5" r="4" fill="none" stroke="#353e42" strokeWidth="2" /><path d="M6 5 9 2" stroke="#353e42" strokeWidth="2" /></svg></Peak>
            <Divider />
            <Meter>
              <MeterCell $bar>1</MeterCell><MeterCell $bar>91 MB</MeterCell>
              <MeterCell $base /><MeterCell>0 <svg width="14" height="8" viewBox="0 0 14 8"><ellipse cx="7" cy="4" rx="6" ry="3" fill="none" stroke="#66737a" strokeWidth="2" /></svg></MeterCell>
            </Meter>
            <Divider />
            <Buttons items={iconRight} />
          </Row>
          <Row $gap={3} $pad="2px 3px 0 3px">
            <Buttons items={iconRow2} />
            <Row $pad="0 0 0 4px"><Magnet c="#394246" /></Row>
            <SnapBox>
              <SnapSelect aria-label="Snap"><option>1/4 step</option></SnapSelect><Tri c="#71797c" />
            </SnapBox>
            <Row $pad="0 2px 0 6px">
              <SmallArrow type="button" aria-label="Previous pattern"><Tri c="#d5dfdf" /></SmallArrow>
              <PatternName type="button">Pattern 1</PatternName>
              <SmallArrow type="button" aria-label="New pattern"><S w={8} h={8}><path d="M4 0v8M0 4h8" /></S></SmallArrow>
            </Row>
            <Buttons items={iconWindows} />
            <NewsPanel><Tri c="#9fb5b1" /></NewsPanel>
          </Row>
        </Block>
      </Toolbar>

      <Workspace>
        <Browser>
          <BrowserHead>
            <BrowserTitle>ser - All <Tri c="#707b7e" /></BrowserTitle>
            <BrowserIcons>
              <S w={14} h={16}><Fill d="M0 0h7v2H3v11H0z" /><Fill d="M4 3h5v5h5v8H4zM10 3l4 4h-4z" /></S>
              <S w={16} h={14}><Fill d="M0 5h4l6-4v12L4 9H0z" /><path strokeWidth="1.600" d="M10 4h4M10 10h4" /></S>
            </BrowserIcons>
          </BrowserHead>
          <Tree $row={27}>{firstTree.map(([t, c], i) => <TreeRow key={i} $tone={c} $pad={i < 3 ? 1 : 0}>{t}</TreeRow>)}</Tree>
          <Tree $row={23}>{secondTree.map((r, i) => <TreeRow key={i} $tone={r.c} $active={r.active} $pad={r.pad}>{r.t}</TreeRow>)}</Tree>
        </Browser>
        <Splitter><svg width="3" height="18"><path stroke="#222c30" strokeWidth="2" strokeDasharray="2 2" d="M1 0V18" /></svg></Splitter>

        <Playlist>
          <TitleBar>
            <TitleTool type="button" aria-label="Menu" $w={6}><Tri c="#d3dcdc" /></TitleTool>
            <TitleTool type="button" aria-label="Snap to grid" $w={34}><Row $pad="0 8px 0 0"><Magnet /></Row></TitleTool>
            {tools.map(([n, icon, tone]) => <TitleTool key={n} type="button" aria-label={n} $tone={tone}>{icon}</TitleTool>)}
            <TitleTool type="button" aria-label="Speaker" $w={30}><Row $pad="0 0 0 10px"><S w={15} h={14}><path strokeWidth="1.600" d="M1 5h3l4-4v12L4 9H1z" /><Fill d="M10 3l5 4-5 4z" /></S></Row></TitleTool>
            <Crumbs><span>Playlist - Arrangement</span><Tri /><span>Pattern 1</span><Tri /></Crumbs>
          </TitleBar>

          <Body>
            <Picker>
              <PickerTabs><Piano /><Wave /><Auto /></PickerTabs>
              <PickerMain>
                <PatternList>
                  <PatternEntry $on>
                    <Ghost><MelodyNotes /></Ghost>
                    <svg width="11" height="12" viewBox="0 0 11 12" aria-hidden="true"><path fill="#dfe6e6" d="M3 1.500H11V10.500H3V9H7V3H3z" /><path fill="#ec4a58" stroke="#2a1518" d="M0 0 6 6 0 12Z" /></svg>
                    Pattern 1
                  </PatternEntry>
                  <PatternEntry><Ghost><PulseNotes /></Ghost><MiniClip />Pattern 2</PatternEntry>
                </PatternList>
                <ListTrack><ListThumb /></ListTrack>
              </PickerMain>
              <AddPattern type="button" aria-label="Add pattern"><S w={9} h={9}><path strokeWidth="3" d="M4.500 0v9M0 4.500h9" /></S></AddPattern>
            </Picker>
            <span />
            <TrackColumn>
              <TrackTab>
                <FilterRow $pad={6} $gap={8}><Wave /><Auto /><Piano /></FilterRow>
                <FilterRow $pad={5} $gap={6}><Filter type="button">NOTE</Filter><Filter type="button">CHAN</Filter><Filter type="button" $on>PAT</Filter></FilterRow>
              </TrackTab>
              <Tracks>
                {Array.from({ length: 16 }, (_, i) => (
                  <TrackHead key={i}>
                    <label htmlFor={`track-${i + 1}`}>Track {i + 1}</label>
                    <Led id={`track-${i + 1}`} type="checkbox" defaultChecked />
                  </TrackHead>
                ))}
              </Tracks>
            </TrackColumn>
            <Arrangement>
              <HScroll>
                <ScrollBack type="button" aria-label="Scroll left"><S w={6} h={10}><path strokeWidth="1.600" d="M5 1 1 5l4 4" /></S></ScrollBack>
                <ScrollThumb />
                <RedMark />
              </HScroll>
              <Ruler>
                {Array.from({ length: 28 }, (_, i) => (
                  <BarNumber key={i} $major={i > 0 && i % 4 === 0}>{i === 0 ? <PlayHead /> : i + 1}</BarNumber>
                ))}
              </Ruler>
              <Lanes>
                <Clip $x={0} $y={0} $w={192}>
                  <ClipTitle><MiniClip />Pattern 1</ClipTitle>
                  <MelodyNotes />
                </Clip>
                <Clip $x={0} $y={56} $w={192}>
                  <ClipTitle><MiniClip />Pattern 2</ClipTitle>
                  <PulseNotes />
                </Clip>
                <Clip $x={421} $y={0} $w={48} $red>
                  <ClipTitle $red><S w={8} h={6}><path strokeWidth="1.800" d="M1 1l3 3 3-3" /></S>Pa..n 3</ClipTitle>
                </Clip>
                <ClickRing>
                  <svg width="42" height="42" viewBox="0 0 42 42" aria-hidden="true">
                    <path fill="#fff" stroke="#14191b" d="M20 22l2-2-1-2 3 1 1-2 7 6v4l5 4c3 3-1 6-3 3l-4-4-4-1z" />
                    <path stroke="#14191b" d="M26 28l5-4" />
                  </svg>
                </ClickRing>
              </Lanes>
            </Arrangement>
          </Body>
        </Playlist>
      </Workspace>

      <Taskbar>
        <Apps>
          <AppButton type="button" aria-label="Explorer" $style="open">
            <svg width="34" height="30" viewBox="0 0 34 30"><path fill="#d7b14f" d="M2 3h9l2 3h19v20H2z" /><path fill="#f7e08a" d="M1 8h32l-2 19H2z" /><path fill="#fff" d="M5 2h5v4H5zM13 4h6v4h-6zM21 6h7v3h-7z" /><path fill="#2b9b4a" d="M5 2h3v2H5z" /><path fill="#d33" d="M13 4h3v2h-3z" /><path fill="none" stroke="#7fc3ea" strokeWidth="5" d="M8 30V21H26V30" /></svg>
          </AppButton>
          <AppButton type="button" aria-label="Cloud drive" $style="flat">
            <svg width="32" height="32" viewBox="0 0 32 32"><rect width="32" height="32" rx="5" fill="#fff" /><g fill="none" strokeWidth="3.500"><circle cx="10" cy="18" r="4.500" stroke="#2aa5ec" /><circle cx="22" cy="18" r="4.500" stroke="#1f8fe0" /><circle cx="16" cy="12" r="4.500" stroke="#e5505d" /><path stroke="#2b7fe0" d="M12 11a4.500 4.500 0 0 1 7-3" /></g><path fill="#d9485a" d="M11 30h5v2h-5z" /><path fill="#2b7fe0" d="M16 30h5v2h-5z" /></svg>
          </AppButton>
          <AppButton type="button" aria-label="FL Studio" $style="lit">
            <svg width="32" height="32" viewBox="0 0 32 32"><circle cx="16" cy="16" r="15" fill="#22272a" /><path fill="#f6952a" d="M8 14c3-5 13-4 16 0 1 6-5 15-9 17C10 29 6 20 8 14z" /><path fill="#ffc445" d="M10 15c2-2 4-2 5 0 0 5-1 9-2 12-3-4-4-8-3-12z" /><path fill="#6fae35" d="M8 13c-1-5 3-7 7-6 2-4 4-5 5-5l-2 6c5 0 7 4 6 7l-5-3-3 3-3-3z" /></svg>
          </AppButton>
          <AppButton type="button" aria-label="Web browser" $style="open">
            <svg width="32" height="32" viewBox="0 0 32 32"><circle cx="16" cy="16" r="14" fill="#eaf7e4" /><circle cx="16" cy="16" r="12" fill="#59bd2f" /><path fill="none" stroke="#fff" strokeWidth="4" d="M9 16H22.500A7 7 0 1 0 21 21" /><path fill="none" stroke="#67c23a" strokeWidth="2" d="M5 31C1 24 14 4 29 1" /></svg>
          </AppButton>
          <AppButton type="button" aria-label="Screen recorder" $style="open"><Camera s={32} /></AppButton>
        </Apps>
        <Tray>
          <TraySet $pad={10}>
            <svg width="16" height="10" viewBox="0 0 16 10"><rect x=".5" y=".5" width="15" height="9" rx="1" fill="#e6e4de" stroke="#6a6a66" /><path stroke="#55534e" strokeDasharray="1 1" d="M2 3.500H14M2 5.500H14M4 7.500H12" /></svg>
            <svg width="16" height="20" viewBox="0 0 16 20"><circle cx="8" cy="8" r="7.500" fill="#1b2a8c" stroke="#0f174f" /><path fill="none" stroke="#fff" strokeWidth="1.800" d="M5.500 6.500c0-3.500 5-3.500 5 0 0 2-2.500 1.800-2.500 4M8 11.500v1.500" /></svg>
            <svg width="10" height="26" viewBox="0 0 10 26"><path fill="none" stroke="#fff" d="M3 1.500h6v4H7M1.500 4.500h5v3h-5z" /><path fill="#fff" d="M2 15h6l-3 3z" /></svg>
          </TraySet>
          <TraySet $pad={8}>
            <Camera s={16} />
            <svg width="16" height="16" viewBox="0 0 16 16"><rect width="16" height="16" rx="1" fill="#1f8fe0" /><path fill="#fff" d="M0 9c2-2 3 3 5 3 3 0 2-9 5-10v8c2 0 2-6 5-7 0 5-1 9-3 12H3z" /></svg>
            <svg width="16" height="16" viewBox="0 0 16 16"><circle cx="8" cy="8" r="7.500" fill="#5fc03a" stroke="#d6f0c8" /><path fill="none" stroke="#fff" strokeWidth="2" d="M4.500 8.500H11.500A3.500 3.500 0 1 0 10.500 11" /></svg>
            <svg width="16" height="16" viewBox="0 0 16 16"><path fill="#61a92c" stroke="#e9f5d8" strokeWidth="1.500" d="M1 2.500 8 1l7 1.500c0 6-2 10-7 12.500C3 12.500 1 8 1 2.500z" /><path fill="#fff" d="M9 3 5 8.500h2.500L6.500 13 11 7H8.500z" /></svg>
            <svg width="16" height="16" viewBox="0 0 16 16"><circle cx="8" cy="8" r="7.500" fill="#f0cf1b" /><path fill="#3f9b33" d="M9 0c4 0 7 3 7 6l-3-1-4-3zM7 16c-4 0-7-3-7-6l3 1 4 3z" /><path stroke="#1d5e1a" strokeWidth="2.500" d="M8 4v8M4 8h8" /></svg>
            <svg width="16" height="16" viewBox="0 0 16 16"><path fill="#f3f6fa" stroke="#44505e" d="M2 5h3l4-4v14l-4-4H2z" /><path fill="none" stroke="#fff" d="M11 5c1.500 2 1.500 4 0 6" /></svg>
            <svg width="16" height="14" viewBox="0 0 16 14"><path stroke="#fff" strokeWidth="2" d="M1.500 13v-3M5 13V8M8.500 13V6M12 13V3M15 13V0" /></svg>
          </TraySet>
          <TrayClock>14:3<br />2023</TrayClock>
        </Tray>
      </Taskbar>

      <Watermark>
        <Camera s={51} />
        <div><WatermarkName lang="zh">嗨格式录屏大师</WatermarkName><WatermarkSite>www.luping.com</WatermarkSite></div>
      </Watermark>
    </Screen>
  );
}
